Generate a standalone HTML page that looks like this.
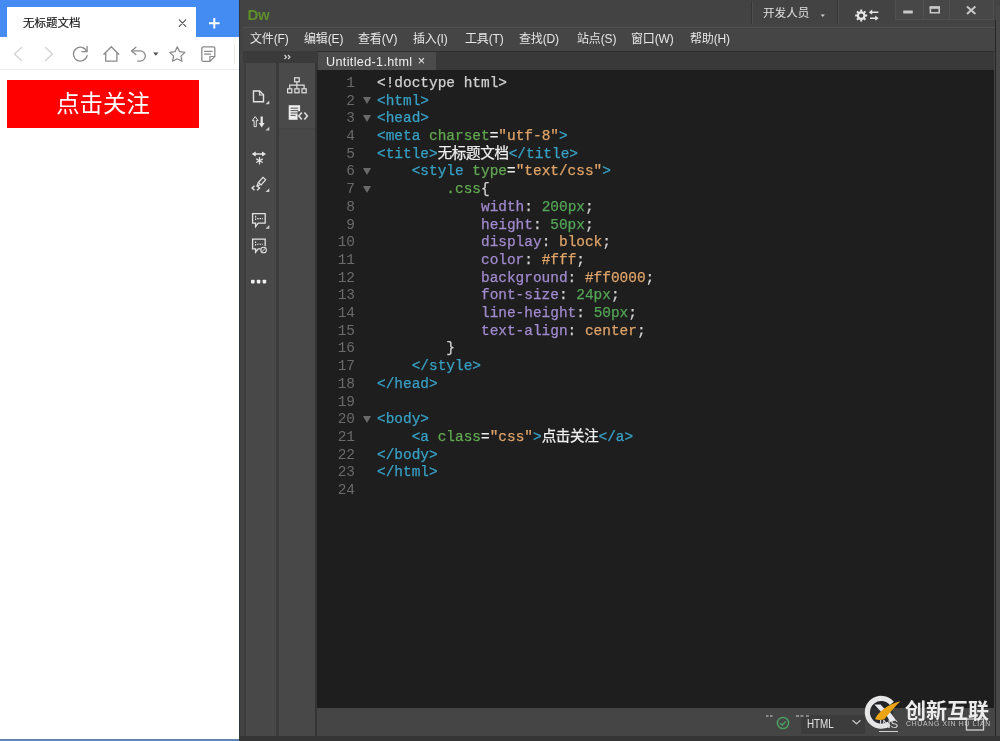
<!DOCTYPE html>
<html lang="zh-CN">
<head>
<meta charset="utf-8">
<title>无标题文档</title>
<style>
*{box-sizing:border-box;margin:0;padding:0}
html,body{width:1000px;height:741px;overflow:hidden;background:#fff}
body{position:relative;font-family:"Liberation Sans","Noto Sans CJK SC",sans-serif}
.abs{position:absolute}
#br,#dw{will-change:transform}
svg{position:absolute;overflow:visible}

/* ---------- browser (left) ---------- */
#br{left:0;top:0;width:240px;height:741px;background:#fff}
#br .strip{left:0;top:0;width:240px;height:37px;background:#448cf2}
#br .tab{left:7px;top:7px;width:189px;height:30px;background:#fff}
#br .ttl{left:23px;top:15px;font-size:11.5px;line-height:16px;color:#161616;letter-spacing:0;-webkit-text-stroke:.15px #161616}
#br .nav{left:0;top:37px;width:240px;height:33px;background:#fff;border-bottom:1px solid #ececec}
#br .btn{left:7px;top:80px;width:192px;height:48px;background:#fe0000;color:#fff;font-size:23.400px;line-height:48px;text-align:center}
#br .foot{left:0;top:739px;width:240px;height:2px;background:#5f86b5}

/* ---------- dreamweaver (right) ---------- */
#dw{left:239px;top:0;width:761px;height:741px;background:#454545;color:#e4e4e4}
#dw .edgeL{left:0;top:0;width:5px;height:741px;background:#434343;border-left:1px solid #30343c}
#dw .title{left:4px;top:0;width:757px;height:27px;background:#434343}
#dw .logo{left:8.500px;top:4.700px;font-size:15px;line-height:20px;color:#5d8f2b;letter-spacing:-.4px;font-weight:bold}
#dw .menu{left:4px;top:27px;width:757px;height:24px;background:#454545;border-top:1px solid #505050}
#dw .mi{top:31px;font-size:12px;line-height:16px;color:#e6e6e6;white-space:nowrap;letter-spacing:-.15px}
#dw .tabbar{left:78px;top:51px;width:677px;height:19px;background:#393939;border-top:1px solid #2e2e2e}
#dw .doctab{left:79px;top:52px;width:117.500px;height:18px;background:#4b4b4b;font-size:12.600px;line-height:20px;color:#efefef;padding-left:8px;white-space:nowrap;letter-spacing:.35px;overflow:hidden}
#dw .code{left:78px;top:70px;width:677px;height:638px;background:#1e1e1e}
#dw .status{left:78px;top:708px;width:677px;height:29px;background:#454545}
#dw .colhead{left:4px;top:51px;width:74px;height:12px;background:#3a3a3a}
#dw .col1{left:7px;top:63px;width:29.500px;height:678px;background:#484848}
#dw .gap{left:5px;top:51px;width:2px;height:690px;background:#3d3d3d}
#dw .gap2{left:36.500px;top:63px;width:3.500px;height:678px;background:#3b3b3b}
#dw .col2{left:40px;top:63px;width:36px;height:65px;background:#4a4a4a}
#dw .col2b{left:40px;top:130px;width:36px;height:611px;background:#484848}
#dw .gap3{left:76px;top:63px;width:2px;height:678px;background:#343434}


#dw .dev{left:524px;top:5px;font-size:11.600px;line-height:16px;color:#e0e0e0;white-space:nowrap}
#dw .vsep{top:1px;width:1px;height:23px;background:#363636;box-shadow:1px 0 0 #4f4f4f}
#dw .wc{left:656px;top:0;width:99px;height:20px;background:#474747;border:1px solid #505050;border-top:0}
#dw .wcd{top:0;width:1px;height:19px;background:#505050}
#dw .edgeR{left:756px;top:20px;width:1px;height:721px;background:#262626}
#dw .edgeR2{left:757px;top:6px;width:4px;height:735px;background:#484848}
#dw .botline{left:0;top:736px;width:761px;height:5px;background:#353535}
#dw .sel{left:562px;top:715px;width:64px;height:19px;background:#3c3c3c}
#dw .html{left:568px;top:716px;font-size:12px;line-height:16px;color:#e2e2e2;letter-spacing:0;transform:scaleX(.82);transform-origin:0 0}
#dw .ins{z-index:3;left:640px;top:716px;font-size:11.500px;line-height:16px;color:#d8d8d8;border-bottom:1px solid #d0d0d0;height:16px}
#wm1{left:905px;top:697px;font-size:21px;line-height:28px;font-weight:bold;color:#ececec;letter-spacing:0;white-space:nowrap;font-family:"Liberation Sans","Noto Sans CJK SC",sans-serif}
#wm2{left:906px;top:719px;font-size:6.800px;line-height:10px;color:#c4c4c4;white-space:nowrap;letter-spacing:.75px}

/* code */
pre{position:absolute;-webkit-text-stroke:.25px currentColor;font-family:"Liberation Mono","Noto Sans CJK SC",monospace;font-size:14.450px;line-height:17.700px;white-space:pre}
#ln{left:78px;top:74.900px;width:38px;text-align:right;color:#6a6a6a;-webkit-text-stroke:0}
#src{left:138px;top:74.900px;color:#d6d6d6}
.t{color:#37a0c5}.a{color:#62a850}.v{color:#e0a468}.p{color:#a18bd0}.n{color:#54a556}.w{color:#ececec}.g{color:#d2d2d2}
.cj{font-family:"Liberation Sans","Noto Sans CJK SC",sans-serif;font-size:14.5px;letter-spacing:-0.3px;color:#f0f0f0;line-height:0}
.fold{position:absolute;left:123.500px;width:0;height:0;border-left:4px solid transparent;border-right:4px solid transparent;border-top:7px solid #6a6a6a}
</style>
</head>
<body>

<!-- ================= BROWSER ================= -->
<div id="br" class="abs">
  <div class="strip abs"></div>
  <div class="tab abs"></div>
  <div class="ttl abs">无标题文档</div>
  <div class="nav abs"></div>

  <svg class="abs" style="left:0;top:0" width="240" height="75" viewBox="0 0 240 75" fill="none" stroke-linecap="round" stroke-linejoin="round">
    <!-- tab close -->
    <path d="M179.3 19.9l6.4 6.4M185.7 19.9l-6.4 6.4" stroke="#555" stroke-width="1.2"/>
    <!-- plus -->
    <path d="M209 23.2h10.6M214.3 17.9v10.6" stroke="#fff" stroke-width="2" stroke-linecap="butt"/>
    <!-- back / forward -->
    <path d="M21.5 47.5l-7 6.5 7 6.5" stroke="#d2d2d2" stroke-width="1.3"/>
    <path d="M45.5 47.5l7 6.5-7 6.5" stroke="#d2d2d2" stroke-width="1.3"/>
    <!-- refresh -->
    <path d="M86.700 51.400a6.900 6.900 0 1 0 .4 4.200" stroke="#8a8a8a" stroke-width="1.300"/>
    <path d="M87.100 46.400v5.200h-5.200" stroke="#8a8a8a" stroke-width="1.300"/>
    <!-- home -->
    <path d="M103.900 54.300l7.400-7.600 7.400 7.600M105.700 52.800v8.400h11.200v-8.400" stroke="#8a8a8a" stroke-width="1.300"/>
    <!-- undo -->
    <path d="M135.900 47.200l-4.400 3.700 4.400 3.700" stroke="#8a8a8a" stroke-width="1.300"/>
    <path d="M131.800 50.900h8.400a5.100 5.100 0 0 1 0 10.200h-2.600" stroke="#8a8a8a" stroke-width="1.300"/>
    <path d="M153.100 52.500l2.700 3.300 2.700-3.300z" fill="#555" stroke="none"/>
    <!-- star -->
    <path d="M177.300 46.900l2.300 4.800 5.300.7-3.900 3.700.95 5.200-4.650-2.500-4.650 2.500.95-5.200-3.900-3.700 5.300-.7z" stroke="#8a8a8a" stroke-width="1.300"/>
    <!-- note -->
    <path d="M203.200 46.900h10.200a1.400 1.400 0 0 1 1.400 1.400v8.300l-4.900 4.700h-6.700a1.400 1.400 0 0 1-1.400-1.400v-11.600a1.400 1.400 0 0 1 1.400-1.400z" stroke="#8a8a8a" stroke-width="1.300"/>
    <path d="M214.700 56.500h-4.800v4.700M204.600 51.300h7.600M204.600 54.200h5.900" stroke="#8a8a8a" stroke-width="1.200"/>
    <path d="M234.500 44v20" stroke="#e9e9e9" stroke-width="1"/>
  </svg>
  <div class="btn abs">点击关注</div>
  <div class="foot abs"></div>
</div>

<!-- ================= DREAMWEAVER ================= -->
<div id="dw" class="abs">
  <div class="edgeL abs"></div>
  <div class="title abs"></div>
  <div class="logo abs">Dw</div>
  <div class="menu abs"></div>
  <div class="mi abs" style="left:11px">文件(F)</div>
  <div class="mi abs" style="left:65px">编辑(E)</div>
  <div class="mi abs" style="left:119px">查看(V)</div>
  <div class="mi abs" style="left:174px">插入(I)</div>
  <div class="mi abs" style="left:226px">工具(T)</div>
  <div class="mi abs" style="left:280px">查找(D)</div>
  <div class="mi abs" style="left:338px">站点(S)</div>
  <div class="mi abs" style="left:392px">窗口(W)</div>
  <div class="mi abs" style="left:451px">帮助(H)</div>


  <div class="vsep abs" style="left:512px"></div>
  <div class="dev abs">开发人员</div>
  <div class="vsep abs" style="left:598px"></div>
  <div class="wc abs"></div>
  <div class="wcd abs" style="left:684px"></div>
  <div class="wcd abs" style="left:710px"></div>
  <svg class="abs" style="left:0;top:0" width="761" height="30" viewBox="239 0 761 30" fill="none" stroke="#e6e6e6">
    <path d="M820.600 14.400h4.400l-2.200 2.600z" fill="#cfcfcf" stroke="none"/>
    <!-- gear -->
    <circle cx="861.200" cy="15.600" r="3.300" stroke-width="2.200"/>
    <g stroke-width="2" stroke-linecap="butt">
      <path d="M861.200 9.600v2.200M861.200 19.400v2.200M855.200 15.600h2.200M865 15.600h2.200M857 11.400l1.500 1.500M863.900 18.300l1.500 1.500M857 19.800l1.500-1.500M863.900 12.900l1.500-1.500"/>
    </g>
    <!-- arrows -->
    <path d="M871 12.200h7.400M870 18.200h6.400" stroke-width="1.500"/>
    <path d="M868.800 12.200l3.400-2.600v5.200zM878.600 18.200l-3.400-2.600v5.200z" fill="#e6e6e6" stroke="none"/>
    <!-- window controls -->
    <path d="M903.200 12h9.600" stroke="#c8c8c8" stroke-width="3"/>
    <path d="M930.400 7.600h8.800v5.200h-8.800z" stroke="#c8c8c8" stroke-width="1.600"/>
    <path d="M929.600 7.400h10.400" stroke="#c8c8c8" stroke-width="2.600"/>
    <path d="M967 6.400l8.400 7.600M975.400 6.400l-8.400 7.600" stroke="#c8c8c8" stroke-width="2"/>
  </svg>
  <div class="colhead abs"></div>
  <div class="gap abs"></div><div class="col1 abs"></div><div class="gap2 abs"></div>
  <div class="col2 abs"></div><div class="col2b abs"></div><div class="gap3 abs"></div>


  <svg class="abs" style="left:0;top:0" width="761" height="741" viewBox="239 0 761 741" fill="none" stroke="#e2e2e2" stroke-width="1.4" stroke-linejoin="miter">
    <!-- » -->
    <path d="M284.500 55l2 2-2 2M288 55l2 2-2 2" stroke="#d8d8d8" stroke-width="1.1"/>
    <!-- new file -->
    <path d="M253.500 91h6.200l3.800 3.800v7h-10z"/>
    <path d="M259.500 91v4h4" stroke-width="1.200"/>
    <path d="M269.300 100.400v3.800h-3.800z" fill="#cfcfcf" stroke="none"/>
    <!-- up / down arrows -->
    <path d="M255.200 116.600l-2.900 4h1.800v6h2.200v-6h1.800z" stroke-width="1"/>
    <path d="M260.600 116.400h2.200v6.600h1.800l-2.900 4.400-2.900-4.400h1.800z" fill="#e8e8e8" stroke="none"/>
    <path d="M269.300 126.800v3.800h-3.800z" fill="#cfcfcf" stroke="none"/>
    <!-- expand + asterisk -->
    <path d="M255 154h8" stroke-width="1.500"/>
    <path d="M251.700 154l4-2.600v5.200zM266 154l-4-2.600v5.200z" fill="#e8e8e8" stroke="none"/>
    <path d="M259.500 157v7.400M256.200 158.900l6.600 3.600M262.800 158.900l-6.600 3.600" stroke-width="1.200"/>
    <!-- pen + <> -->
    <path d="M258.400 182.500l4.600-5.200 2.700 2.400-4.600 5.200z" stroke-width="1.200"/>
    <path d="M258.400 182.500l-1.500 3.300 3.400-1.100" stroke-width="1.100"/>
    <path d="M254.500 185.800l-2.400 2.200 2.400 2.200M257.100 185.800l2.400 2.200-2.400 2.200" stroke-width="1.400"/>
    <path d="M269.300 188.200v3.800h-3.800z" fill="#cfcfcf" stroke="none"/>
    <!-- comment 1 -->
    <path d="M252.600 213.600h12.600v9.600h-7l-2.600 3.400v-3.400h-3z" stroke-width="1.300"/>
    <path d="M255.600 215.800v5M257 218.600h6" stroke-width="1.100" stroke-dasharray="1.600 1"/>
    <path d="M269.300 225v3.800h-3.800z" fill="#cfcfcf" stroke="none"/>
    <!-- comment 2 -->
    <path d="M260.500 248.800h-2.300l-2.600 3.400v-3.400h-3v-9.600h12.600v7" stroke-width="1.300"/>
    <path d="M255.600 241.400v5M257 244.200h6" stroke-width="1.100" stroke-dasharray="1.600 1"/>
    <circle cx="263.600" cy="250" r="2.800" stroke-width="1.100" fill="#484848"/>
    <path d="M261.700 251.900l3.800-3.800" stroke-width="1"/>
    <!-- dots -->
    <g fill="#f0f0f0" stroke="none"><rect x="251" y="279.800" width="3.600" height="3.600" rx=".8"/><rect x="256.800" y="279.800" width="3.600" height="3.600" rx=".8"/><rect x="262.600" y="279.800" width="3.600" height="3.600" rx=".8"/></g>
    <!-- tree -->
    <g stroke-width="1.200">
      <rect x="294.600" y="77.800" width="4.600" height="4"/>
      <rect x="287.600" y="88.800" width="4.200" height="4"/>
      <rect x="294.800" y="88.800" width="4.200" height="4"/>
      <rect x="302" y="88.800" width="4.200" height="4"/>
      <path d="M296.900 81.800v7M289.700 88.800v-3.600h14.400v3.600"/>
    </g>
    <!-- code doc -->
    <path d="M288.700 105.200h11.400v14.600h-11.400z" fill="#ececec" stroke="none"/>
    <path d="M290.600 108.200h7.600M290.600 110.600h7.600M290.600 113h7.600M290.600 115.400h5" stroke="#555" stroke-width="1"/>
    <path d="M297.600 111.200h11v9.400h-11z" fill="#4b4b4b" stroke="none"/>
    <path d="M301.800 112.400l-3 3.600 3 3.600M304.400 112.400l3 3.600-3 3.600" stroke-width="1.500"/>
  </svg>
  <div class="tabbar abs"></div>
  <div class="doctab abs">Untitled-1.html <span style="position:relative;left:1.500px;top:-1px">×</span></div>
  <div class="code abs"></div>
  <div class="status abs"></div>

  <div class="fold" style="top:97.4px"></div>
  <div class="fold" style="top:115.1px"></div>
  <div class="fold" style="top:168.2px"></div>
  <div class="fold" style="top:185.9px"></div>
  <div class="fold" style="top:416.0px"></div>

  <div class="sel abs"></div>
  <div class="html abs">HTML</div>
  <div class="ins abs">INS</div>
  <div class="edgeR abs"></div><div class="edgeR2 abs"></div>
  <div class="botline abs"></div>
  <svg class="abs" style="left:0;top:690px" width="761" height="51" viewBox="239 690 761 51" fill="none">
    <circle cx="783" cy="723" r="5.600" stroke="#4c9f63" stroke-width="1.500"/>
    <path d="M780.200 723.200l2 2 3.400-3.800" stroke="#4c9f63" stroke-width="1.500"/>
    <path d="M766 716h2.500M770 716h2.500M796 716h3M800.500 716h3M806 716h3" stroke="#cfcfcf" stroke-width="1.200"/>
    <path d="M852.500 720.200l4 3.600 4-3.600" stroke="#bdbdbd" stroke-width="1.300"/>
    <rect x="966.500" y="719" width="17" height="11" stroke="#cfcfcf" stroke-width="1.300"/>
    <!-- watermark logo -->
    <circle cx="881.300" cy="712.300" r="11.500" fill="#23252b" opacity=".75"/>
    <path d="M891.900 703.400A13.900 13.900 0 1 0 889.100 723.800" stroke="#e6e6e6" stroke-width="5.200"/>
    <path d="M874.400 704.600h6.100l6 6.400-4 2.600z" fill="#e8e8ee"/>
    <path d="M886.200 714.600l3.600-2.800 6.200 8.400-6 1.800z" fill="#e8e8ee"/>
    <path d="M875 719.300C878 712 888 704 900.500 701.200C895 706 890 713 884 719.500C881 720.200 878 720.200 875 719.300z" fill="#eda413"/>
  </svg>
  <div id="wm1" class="abs" style="left:666px">创新互联</div>
  <div id="wm2" class="abs" style="left:667px">CHUANG XIN HU LIAN</div>
<pre id="ln">1
2
3
4
5
6
7
8
9
10
11
12
13
14
15
16
17
18
19
20
21
22
23
24</pre>
<pre id="src"><span class="g">&lt;!doctype html&gt;</span>
<span class="t">&lt;html&gt;</span>
<span class="t">&lt;head&gt;</span>
<span class="t">&lt;meta</span> <span class="a">charset</span><span class="w">=</span><span class="v">"utf-8"</span><span class="t">&gt;</span>
<span class="t">&lt;title&gt;</span><span class="cj">无标题文档</span><span class="t">&lt;/title&gt;</span>
    <span class="t">&lt;style</span> <span class="a">type</span><span class="w">=</span><span class="v">"text/css"</span><span class="t">&gt;</span>
        <span class="a">.css</span><span class="g">{</span>
            <span class="p">width</span><span class="g">:</span> <span class="n">200px</span><span class="g">;</span>
            <span class="p">height</span><span class="g">:</span> <span class="n">50px</span><span class="g">;</span>
            <span class="p">display</span><span class="g">:</span> <span class="v">block</span><span class="g">;</span>
            <span class="p">color</span><span class="g">:</span> <span class="v">#fff</span><span class="g">;</span>
            <span class="p">background</span><span class="g">:</span> <span class="v">#ff0000</span><span class="g">;</span>
            <span class="p">font-size</span><span class="g">:</span> <span class="n">24px</span><span class="g">;</span>
            <span class="p">line-height</span><span class="g">:</span> <span class="n">50px</span><span class="g">;</span>
            <span class="p">text-align</span><span class="g">:</span> <span class="v">center</span><span class="g">;</span>
        <span class="g">}</span>
    <span class="t">&lt;/style&gt;</span>
<span class="t">&lt;/head&gt;</span>

<span class="t">&lt;body&gt;</span>
    <span class="t">&lt;a</span> <span class="a">class</span><span class="w">=</span><span class="v">"css"</span><span class="t">&gt;</span><span class="cj">点击关注</span><span class="t">&lt;/a&gt;</span>
<span class="t">&lt;/body&gt;</span>
<span class="t">&lt;/html&gt;</span>
</pre>
</div>
</body>
</html>
